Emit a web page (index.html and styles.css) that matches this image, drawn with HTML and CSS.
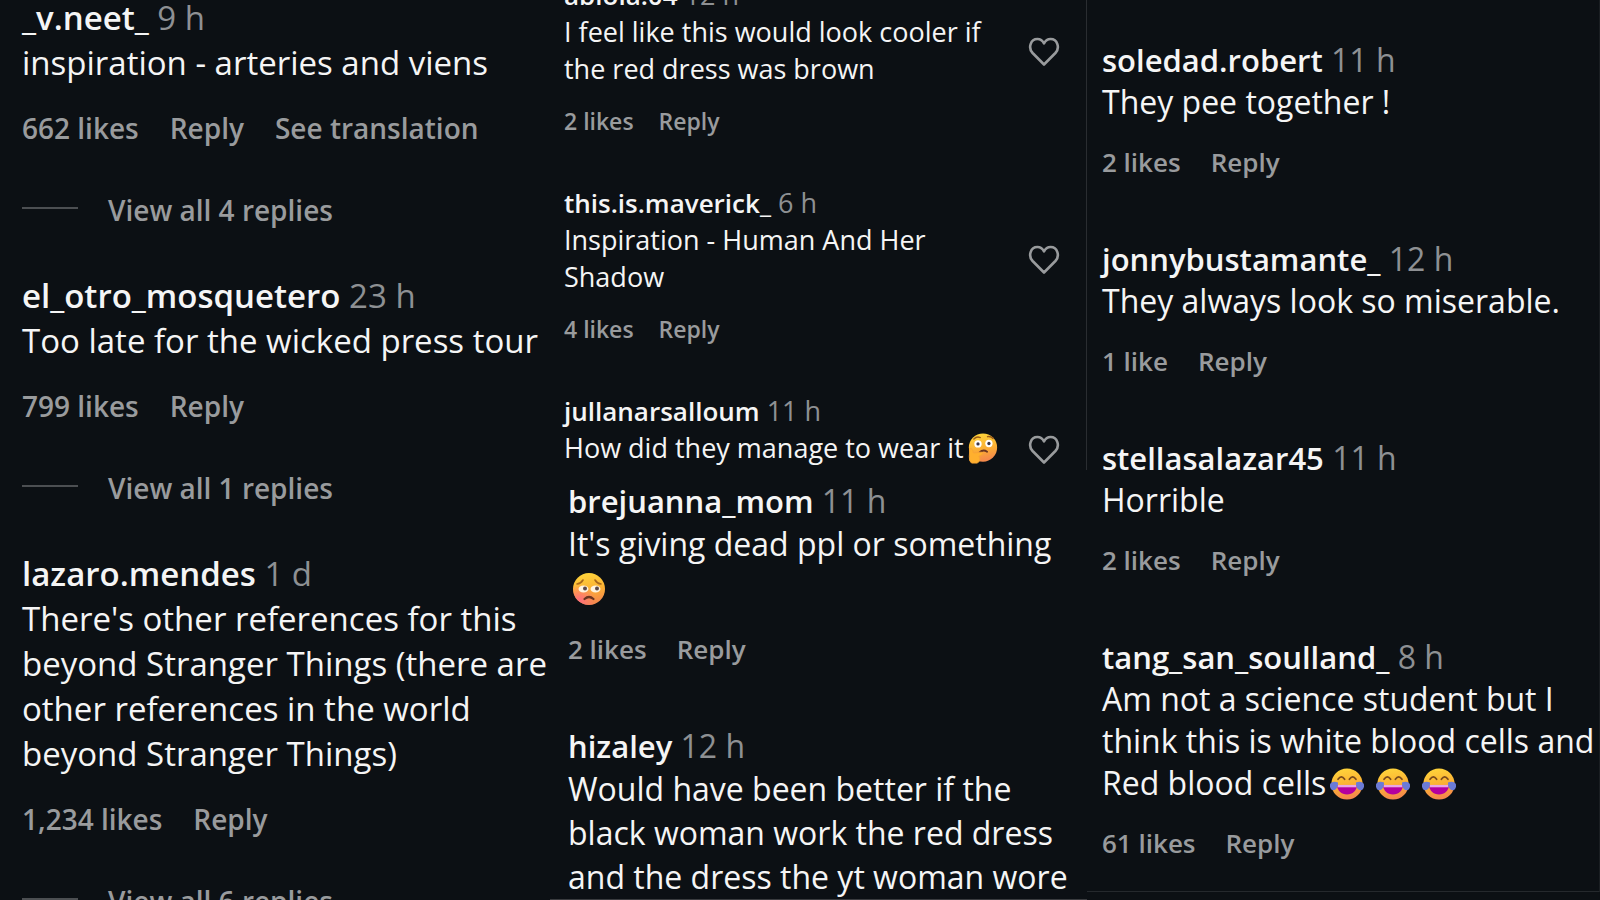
FILE: index.html
```html
<!DOCTYPE html>
<html lang="en">
<head>
<meta charset="utf-8">
<title>Comments</title>
<link rel="stylesheet" href="styles.css">
</head>
<body>
<svg class="defs" aria-hidden="true">
  <defs>
    <linearGradient id="skin" x1="0" y1="0" x2="0.2" y2="1">
      <stop offset="0" stop-color="#ffd93b"/>
      <stop offset="0.6" stop-color="#fbb034"/>
      <stop offset="1" stop-color="#f58a4b"/>
    </linearGradient>
    <radialGradient id="blush" cx="0.2" cy="0.85" r="0.5">
      <stop offset="0" stop-color="#ff6f7d"/>
      <stop offset="1" stop-color="#ff6f7d" stop-opacity="0"/>
    </radialGradient>
    <symbol id="heart" viewBox="0 0 32 30">
      <path d="M16 27.5 4.6 16C-.2 10.8 2.600 2 9.400 2 12.600 2 14.600 3.600 16 6.400 17.400 3.600 19.400 2 22.600 2 29.400 2 32.200 10.800 27.400 16Z" fill="none" stroke="currentColor" stroke-width="2.600" stroke-linejoin="round"/>
    </symbol>
    <symbol id="joy" viewBox="0 0 36 34">
      <circle cx="18" cy="17" r="16.500" fill="url(#skin)"/>
      <path d="M8.500 12q3.500-5 7 0M20.500 12q3.500-5 7 0" fill="none" stroke="#7a4a1c" stroke-width="1.800" stroke-linecap="round"/>
      <path d="M7.500 18h21c0 6-4.500 10-10.500 10S7.500 24 7.500 18Z" fill="#b4009e"/>
      <path d="M8 18h20v2.500H8Z" fill="#e9a6e6"/>
      <path d="M0 17.500C1 14.500 5 14 8.500 15.500 8.500 20 7 23.500 3.500 23.500 1 23.500-.5 20.500 0 17.500ZM36 17.500C35 14.500 31 14 27.500 15.500 27.500 20 29 23.500 32.500 23.500 35 23.500 36.500 20.500 36 17.500Z" fill="#6b7bd6"/>
    </symbol>
    <symbol id="sad" viewBox="0 0 34 34">
      <circle cx="17" cy="17" r="16" fill="url(#skin)"/>
      <circle cx="17" cy="17" r="16" fill="url(#blush)"/>
      <ellipse cx="11.500" cy="17" rx="5" ry="3.500" fill="#fff4e0"/>
      <ellipse cx="23.500" cy="17" rx="5" ry="3.500" fill="#fff4e0"/>
      <circle cx="13" cy="16.500" r="2" fill="#5b4a4a"/>
      <circle cx="25" cy="16.500" r="2" fill="#5b4a4a"/>
      <path d="M5 12q4-.5 6-4M23 8q2 3.500 6 4" fill="none" stroke="#a8681c" stroke-width="1.600" stroke-linecap="round"/>
      <path d="M12.500 27q4.500-4 9 0" fill="none" stroke="#6b3520" stroke-width="2.200" stroke-linecap="round"/>
    </symbol>
    <symbol id="think" viewBox="0 0 32 34">
      <circle cx="16" cy="16" r="15.500" fill="url(#skin)"/>
      <circle cx="10.500" cy="12" r="4" fill="#fff"/>
      <circle cx="22.500" cy="11.500" r="4" fill="#fff"/>
      <circle cx="10.500" cy="12" r="1.800" fill="#3b3544"/>
      <circle cx="22.500" cy="11.500" r="1.800" fill="#3b3544"/>
      <path d="M6 6.500q3-3 7-1.500M21 4q4-.5 6 2" fill="none" stroke="#9a5a18" stroke-width="1.600" stroke-linecap="round"/>
      <path d="M12 21.500q4-4 8.500-1" fill="none" stroke="#6b3520" stroke-width="2" stroke-linecap="round"/>
      <path d="M1.500 17q3-1 4 5l9-1q2.500 1.500 0 3l-3 1.500q3 5-2 7.500H3.500Q.5 31 1 26Z" fill="#ffb02e" stroke="#f7a433" stroke-width="1"/>
    </symbol>
  </defs>
</svg>
<main class="board">
  <section class="feed feed-large">
    <article class="comment">
      <h2 class="head"><a class="user" href="#">_v.neet_</a> <time>9 h</time></h2>
      <p class="text">inspiration - arteries and viens</p>
      <div class="actions"><button>662 likes</button><button>Reply</button><button>See translation</button></div>
      <button class="replies">View all 4 replies</button>
    </article>
    <article class="comment">
      <h2 class="head"><a class="user" href="#">el_otro_mosquetero</a> <time>23 h</time></h2>
      <p class="text">Too late for the wicked press tour</p>
      <div class="actions"><button>799 likes</button><button>Reply</button></div>
      <button class="replies">View all 1 replies</button>
    </article>
    <article class="comment">
      <h2 class="head"><a class="user" href="#">lazaro.mendes</a> <time>1 d</time></h2>
      <p class="text">There's other references for this<br>beyond Stranger Things (there are<br>other references in the world<br>beyond Stranger Things)</p>
      <div class="actions"><button>1,234 likes</button><button>Reply</button></div>
      <button class="replies">View all 6 replies</button>
    </article>
  </section>

  <div class="middle">
    <section class="feed feed-small">
      <article class="comment likeable">
        <div>
          <h2 class="head"><a class="user" href="#">abiola.04</a> <time>12 h</time></h2>
          <p class="text">I feel like this would look cooler if<br>the red dress was brown</p>
          <div class="actions"><button>2 likes</button><button>Reply</button></div>
        </div>
        <button class="like" aria-label="Like"><svg><use href="#heart"/></svg></button>
      </article>
      <article class="comment likeable">
        <div>
          <h2 class="head"><a class="user" href="#">this.is.maverick_</a> <time>6 h</time></h2>
          <p class="text">Inspiration - Human And Her<br>Shadow</p>
          <div class="actions"><button>4 likes</button><button>Reply</button></div>
        </div>
        <button class="like" aria-label="Like"><svg><use href="#heart"/></svg></button>
      </article>
      <article class="comment likeable short">
        <div>
          <h2 class="head"><a class="user" href="#">jullanarsalloum</a> <time>11 h</time></h2>
          <p class="text">How did they manage to wear it<svg class="emoji" role="img" aria-label="thinking face"><use href="#think"/></svg></p>
        </div>
        <button class="like" aria-label="Like"><svg><use href="#heart"/></svg></button>
      </article>
    </section>
    <section class="feed feed-medium feed-lower">
      <article class="comment">
        <h2 class="head"><a class="user" href="#">brejuanna_mom</a> <time>11 h</time></h2>
        <p class="text">It's giving dead ppl or something<br><svg class="emoji" role="img" aria-label="sad face"><use href="#sad"/></svg></p>
        <div class="actions"><button>2 likes</button><button>Reply</button></div>
      </article>
      <article class="comment">
        <h2 class="head"><a class="user" href="#">hizaley</a> <time>12 h</time></h2>
        <p class="text">Would have been better if the<br>black woman work the red dress<br>and the dress the yt woman wore</p>
      </article>
    </section>
  </div>

  <section class="feed feed-medium feed-right">
    <article class="comment">
      <h2 class="head"><a class="user" href="#">soledad.robert</a> <time>11 h</time></h2>
      <p class="text">They pee together !</p>
      <div class="actions"><button>2 likes</button><button>Reply</button></div>
    </article>
    <article class="comment">
      <h2 class="head"><a class="user" href="#">jonnybustamante_</a> <time>12 h</time></h2>
      <p class="text">They always look so miserable.</p>
      <div class="actions"><button>1 like</button><button>Reply</button></div>
    </article>
    <article class="comment">
      <h2 class="head"><a class="user" href="#">stellasalazar45</a> <time>11 h</time></h2>
      <p class="text">Horrible</p>
      <div class="actions"><button>2 likes</button><button>Reply</button></div>
    </article>
    <article class="comment">
      <h2 class="head"><a class="user" href="#">tang_san_soulland_</a> <time>8 h</time></h2>
      <p class="text">Am not a science student but I<br>think this is white blood cells and<br>Red blood cells<svg class="emoji" role="img" aria-label="tears of joy"><use href="#joy"/></svg><svg class="emoji" role="img" aria-label="tears of joy"><use href="#joy"/></svg><svg class="emoji" role="img" aria-label="tears of joy"><use href="#joy"/></svg></p>
      <div class="actions"><button>61 likes</button><button>Reply</button></div>
    </article>
  </section>
</main>
</body>
</html>
```

FILE: styles.css
```css
* {
  box-sizing: border-box;
}

body {
  margin: 0;
  background: #0c1014;
  color: #f5f5f5;
  font-family: "Open Sans", "Noto Sans", sans-serif;
}

.defs {
  position: absolute;
  width: 0;
  height: 0;
}

.board {
  display: grid;
  grid-template-columns: minmax(0, 550fr) minmax(0, 537fr) minmax(0, 513fr);
  grid-template-rows: minmax(0, 1fr);
  height: 100vh;
  overflow: hidden;
}

.middle {
  display: flex;
  flex-direction: column;
}

.feed {
  display: flex;
  flex-direction: column;
  gap: var(--gap);
  white-space: nowrap;
}

.feed-large {
  --name: 33px;
  --size: 33px;
  --head-line: 44px;
  --text-line: 45px;
  --small: 28px;
  --small-line: 38px;
  --space: 24px;
  --gap: 45px;
  --between: 31px;
  margin-top: -4px;
  padding-left: 22px;
}

.feed-small {
  --name: 26px;
  --size: 27px;
  --head-line: 36px;
  --text-line: 37px;
  --small: 23px;
  --small-line: 32px;
  --space: 18px;
  --gap: 48px;
  --between: 25px;
  margin-top: -23px;
  padding: 0 26px 4px 14px;
  border-right: 1px solid #2a2d31;
}

.feed-medium {
  --name: 31px;
  --size: 32px;
  --head-line: 42px;
  --text-line: 42px;
  --small: 26px;
  --small-line: 36px;
  --space: 21px;
  --gap: 58px;
  --between: 30px;
}

.feed-lower {
  --text-line: 44px;
  flex: 1 1 0;
  min-height: 0;
  padding: 10px 0 0 18px;
  border-bottom: 1px solid #3a3c3f;
}

.feed-right {
  align-self: start;
  padding: 39px 0 30px 15px;
  border-right: 1px solid #1a1e22;
  border-bottom: 1px solid #25292d;
}

.head {
  margin: 0;
  font-size: var(--size);
  line-height: var(--head-line);
  font-weight: 400;
}

.user {
  color: inherit;
  font-size: var(--name);
  font-weight: 600;
  text-decoration: none;
}

.head time {
  color: #8e9093;
}

.text {
  margin: 0;
  font-size: var(--size);
  line-height: var(--text-line);
}

.actions {
  display: flex;
  gap: var(--between);
  margin-top: var(--space);
}

button {
  padding: 0;
  border: 0;
  background: none;
  color: #999b9d;
  font: inherit;
}

.actions button,
.replies {
  font-size: var(--small);
  line-height: var(--small-line);
  font-weight: 600;
}

.replies {
  display: flex;
  align-items: center;
  gap: 30px;
  margin-top: 44px;
}

.replies::before {
  content: "";
  width: 56px;
  height: 2px;
  margin-bottom: 4px;
  background: #4c4f52;
}

.likeable {
  display: flex;
  justify-content: space-between;
  align-items: flex-start;
}

.like {
  margin-top: 60px;
}

.short .like {
  margin-top: 42px;
}

.like svg {
  display: block;
  width: 32px;
  height: 30px;
}

.emoji {
  display: inline-block;
  width: 34px;
  height: 34px;
  margin: 0 8px 0 4px;
  vertical-align: -6px;
}

.feed-small .emoji {
  width: 30px;
  height: 31px;
}
```
